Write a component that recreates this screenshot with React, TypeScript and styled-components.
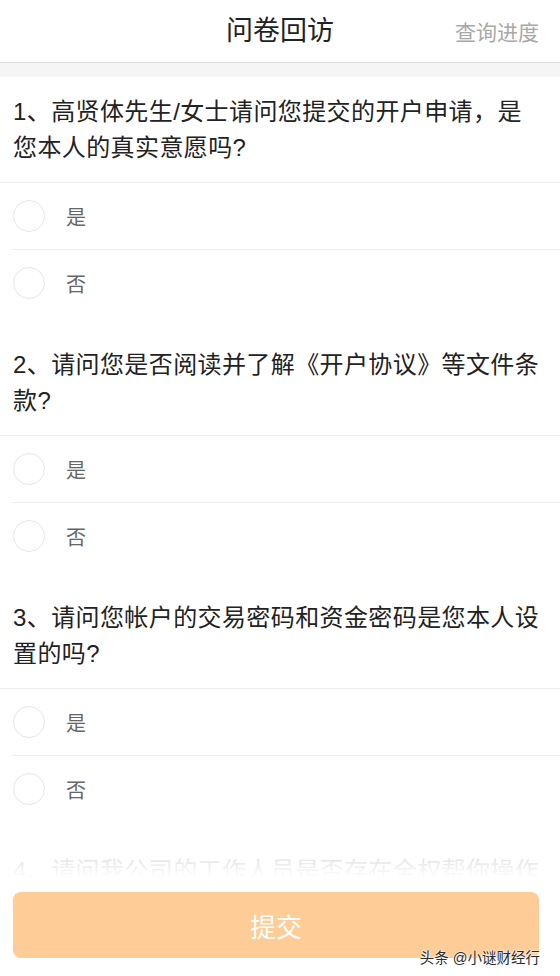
import React from 'react';
import styled, { createGlobalStyle } from 'styled-components';

const GlobalStyle = createGlobalStyle`
   html, body {
      margin: 0;
      padding: 0;
      background: #fff;
      font-family: "Liberation Sans", "Noto Sans CJK SC", sans-serif;
   }
`;

const Screen = styled.div`
   position: relative;
   width: 560px;
   height: 100vh;
   display: flex;
   flex-direction: column;
   overflow: hidden;
`;

const Header = styled.header`
   position: relative;
   flex-shrink: 0;
   height: 62px;
   display: flex;
   align-items: center;
   justify-content: center;
   border-bottom: 1px solid #dcdcdc;
   background: #fff;
`;

const Title = styled.h1`
   margin: 0;
   font-size: 27px;
   font-weight: 400;
   color: #222;
   padding-bottom: 6px;
`;

const HeaderLink = styled.span`
   position: absolute;
   right: 21px;
   top: 16px;
   font-size: 21px;
   color: #a8a8a8;
`;

const Content = styled.main`
   flex: 1;
   overflow-y: auto;
   scrollbar-width: none;
   padding-bottom: 140px;
`;

const Band = styled.div`
   height: 14px;
   background: #f5f5f5;
`;

const QuestionBlock = styled.section`
   margin-bottom: 14px;
`;

const QuestionText = styled.p`
   margin: 0;
   padding: 17px 19px 16px 13px;
   font-size: 24px;
   line-height: 36px;
   color: #222;
   letter-spacing: 0.4px;
   border-bottom: 1px solid #ececec;
`;

const OptionList = styled.div`
   display: flex;
   flex-direction: column;
`;

const OptionRow = styled.label`
   height: 66px;
   display: flex;
   align-items: center;
   padding-left: 13px;
   & + & {
      border-top: 1px solid #ececec;
      margin-left: 12px;
      padding-left: 1px;
   }
`;

const Radio = styled.span`
   width: 30px;
   height: 30px;
   border-radius: 50%;
   border: 1.5px solid #e6e6e6;
   flex-shrink: 0;
`;

const OptionText = styled.span`
   margin-left: 21px;
   font-size: 20px;
   color: #666;
`;

const Footer = styled.footer`
   position: absolute;
   left: 0;
   right: 0;
   bottom: 0;
   padding: 46px 21px 18px 13px;
   background: linear-gradient(
      to bottom,
      rgba(255, 255, 255, 0.8) 0px,
      rgba(255, 255, 255, 0.9) 16px,
      #fff 32px
   );
`;

const SubmitButton = styled.button`
   width: 100%;
   height: 66px;
   border: none;
   border-radius: 8px;
   background: #fecd97;
   color: #fff;
   font-family: inherit;
   font-size: 26px;
   padding: 0;
`;

const Watermark = styled.span`
   position: absolute;
   right: 20px;
   bottom: 9px;
   font-size: 14.5px;
   color: #2a2a2a;
   text-shadow: 0 0 2px #fff, 0 0 2px #fff, 0 0 1px #fff;
`;

const questions = [
   '1、高贤体先生/女士请问您提交的开户申请，是您本人的真实意愿吗?',
   '2、请问您是否阅读并了解《开户协议》等文件条款?',
   '3、请问您帐户的交易密码和资金密码是您本人设置的吗?',
   '4、请问我公司的工作人员是否存在全权帮你操作账户的行为?',
];

const options = ['是', '否'];

const App: React.FC = () => {
   return (
      <Screen>
         <GlobalStyle />
         <Header>
            <Title>问卷回访</Title>
            <HeaderLink>查询进度</HeaderLink>
         </Header>
         <Content>
            <Band />
            {questions.map((q) => (
               <QuestionBlock key={q}>
                  <QuestionText>{q}</QuestionText>
                  <OptionList>
                     {options.map((o) => (
                        <OptionRow key={o}>
                           <Radio />
                           <OptionText>{o}</OptionText>
                        </OptionRow>
                     ))}
                  </OptionList>
               </QuestionBlock>
            ))}
         </Content>
         <Footer>
            <SubmitButton>提交</SubmitButton>
            <Watermark>头条 @小谜财经行</Watermark>
         </Footer>
      </Screen>
   );
};

export default App;
